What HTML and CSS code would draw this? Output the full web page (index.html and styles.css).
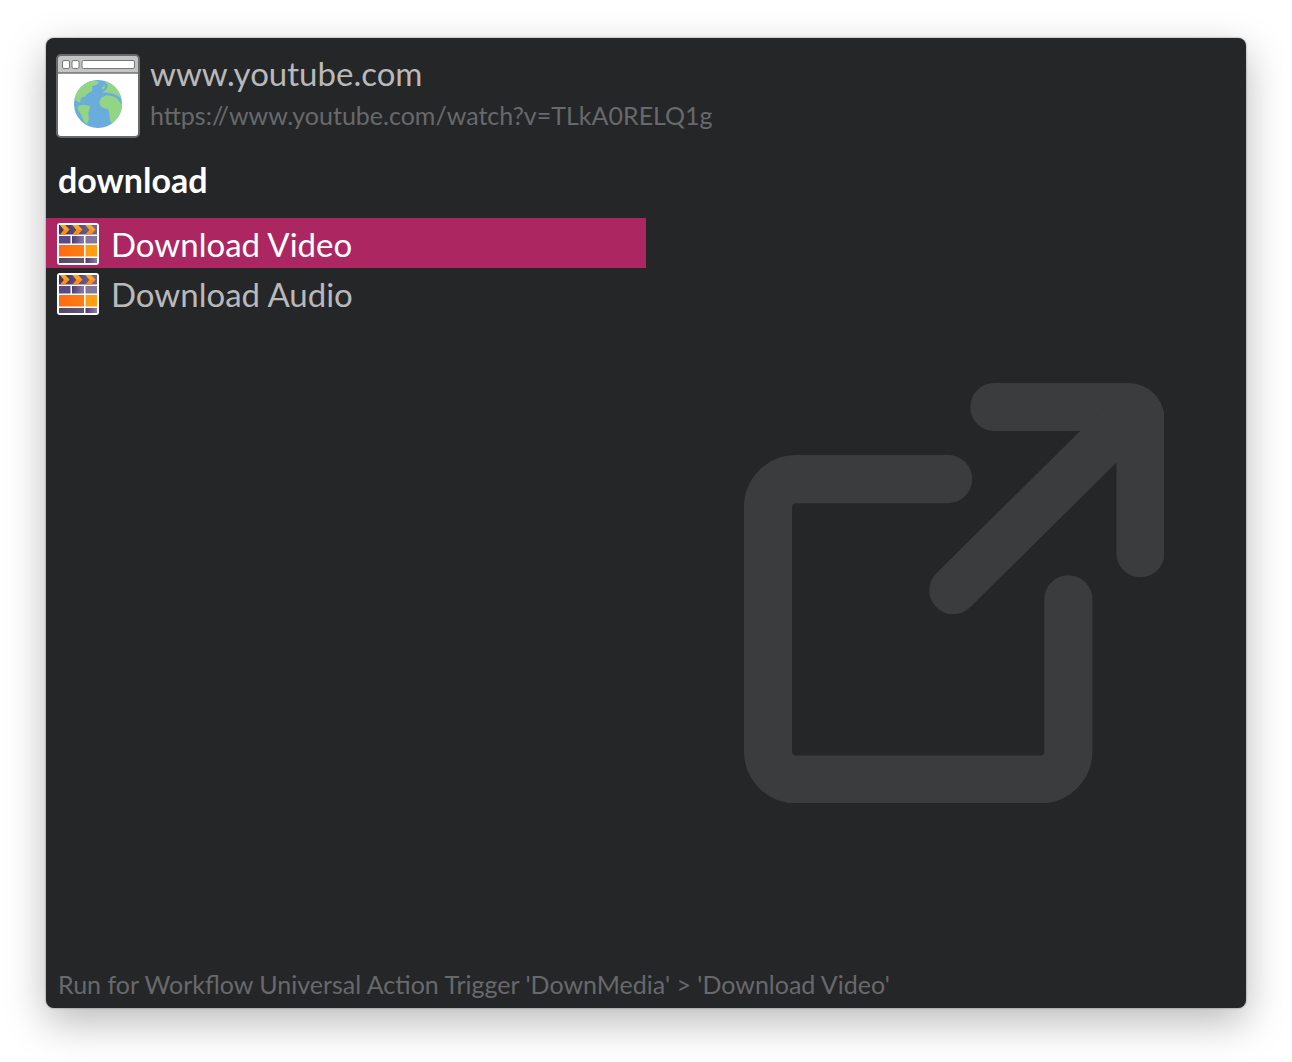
FILE: index.html
```html
<!DOCTYPE html>
<html lang="en">
<head>
<meta charset="utf-8">
<title>Universal Actions</title>
<link rel="stylesheet" href="styles.css">
</head>
<body>
<svg class="defs" aria-hidden="true">
  <defs>
    <linearGradient id="plum"><stop offset="0" stop-color="#4b3b74"/><stop offset="1" stop-color="#8c7da8"/></linearGradient>
    <linearGradient id="slate"><stop offset="0" stop-color="#544a64"/><stop offset="1" stop-color="#625477"/></linearGradient>
    <linearGradient id="orange"><stop offset="0" stop-color="#ff6a14"/><stop offset="1" stop-color="#ff7c12"/></linearGradient>
    <linearGradient id="board"><stop offset="0" stop-color="#40335f"/><stop offset="1" stop-color="#75659a"/></linearGradient>
    <symbol id="clapper" viewBox="0 0 42 42">
      <rect width="42" height="42" rx="3" fill="#fff"/>
      <rect x="2" y="2" width="38" height="9.500" fill="url(#board)"/>
      <path d="M3 2h5l4.500 4.700-4.500 4.800H3l4-4.800zM15.500 2h5.500l4.500 4.700-4.500 4.800h-5.500l4-4.800zM28.500 2h5.500l4.500 4.700-4.500 4.800h-5.500l4-4.800z" fill="#ff8c18"/>
      <path d="M3 2h5l4.500 4.700H7zM15.500 2h5.500l4.500 4.700h-6zM28.500 2h5.500l4.500 4.700h-6z" fill="#ffa61f"/>
      <rect x="2" y="13" width="11.500" height="7.500" fill="#5a4982"/>
      <rect x="15" y="13" width="12" height="7.500" fill="url(#plum)"/>
      <rect x="28.500" y="13" width="11.500" height="7.500" fill="#85769f"/>
      <rect x="2" y="22" width="25" height="11.500" fill="url(#orange)"/>
      <rect x="28.500" y="22" width="11.500" height="11.500" fill="#ff9d15"/>
      <rect x="2" y="35" width="25" height="5" fill="url(#slate)"/>
      <rect x="28.500" y="35" width="11.500" height="5" fill="url(#plum)"/>
    </symbol>
    <clipPath id="globe"><circle cx="42" cy="50" r="24"/></clipPath>
  </defs>
</svg>
<main class="panel">
  <header class="subject">
    <svg class="subject-icon" viewBox="0 0 84 84" aria-hidden="true">
      <rect x="1" y="1" width="82" height="82" rx="4" fill="#fff"/>
      <path d="M1 19V5a4 4 0 0 1 4-4h74a4 4 0 0 1 4 4v14z" fill="#c3c4c4"/>
      <path d="M1 19h82" stroke="#717273" stroke-width="1.500"/>
      <rect x="1" y="1" width="82" height="82" rx="4" fill="none" stroke="#69696a" stroke-width="2"/>
      <g fill="#fff" stroke="#777" stroke-width="1">
        <rect x="6.500" y="6.500" width="7" height="8" rx="1.500"/>
        <rect x="16" y="6.500" width="7" height="8" rx="1.500"/>
        <rect x="26" y="6.500" width="52.500" height="8" rx="1.500"/>
      </g>
      <circle cx="42" cy="50" r="24" fill="#6aacdc"/>
      <g clip-path="url(#globe)" fill="#94d585">
        <path d="M16 48V36L29 27C34 26.500 40 26.500 42.500 27.500C43 29.500 40 31.500 37 31.500C35 33 37 35 36 37C33 38 32 40 30 41L29 43C26 42 24 44 24.500 48C22 50 20 45 17.500 46z"/>
        <path d="M22 52C26 50.500 31 51 34.500 52.500C33 56 32 58 32.500 62C33 65 32.500 68 31 70C27 68 26 62 23.500 58C22 56 21 54 22 52z"/>
        <path d="M46 34L49 30L48.500 34.500L45.500 35.500z"/>
        <path d="M46 38.500L50 36L52 31L49 28L54 26L70 38V49C64 42 57 38 46 38.500z"/>
        <path d="M46 43.500C49 40.500 55 41 58 43C63 44 62 48 67 51V56C64 60 62 66 56 69C52 67 55 61 52 55C48 55 43.500 52 43.500 49C43.500 46 44.500 45 46 43.500z"/>
      </g>
    </svg>
    <div class="subject-text">
      <h1 class="subject-title">www.youtube.com</h1>
      <p class="subject-url">https://www.youtube.com/watch?v=TLkA0RELQ1g</p>
    </div>
  </header>
  <input class="search" type="text" value="download" aria-label="Search actions">
  <div class="body">
    <ul class="actions">
      <li><button class="action selected" type="button"><svg class="action-icon" aria-hidden="true"><use href="#clapper"/></svg>Download Video</button></li>
      <li><button class="action" type="button"><svg class="action-icon" aria-hidden="true"><use href="#clapper"/></svg>Download Audio</button></li>
    </ul>
    <div class="preview">
      <svg class="preview-icon" viewBox="0 0 420 420" aria-hidden="true">
        <g fill="none" stroke="#3b3c3e" stroke-width="48" stroke-linecap="round">
          <path d="M204 96H52a28 28 0 0 0-28 28V368a28 28 0 0 0 28 28H296a28 28 0 0 0 28-28V216"/>
          <path d="M250 24H384a12 12 0 0 1 12 12V170"/>
          <path d="M209 207L386 32"/>
        </g>
      </svg>
    </div>
  </div>
  <footer class="status">Run for Workflow Universal Action Trigger 'DownMedia' &gt; 'Download Video'</footer>
</main>
</body>
</html>
```
FILE: styles.css
```css
* {
  box-sizing: border-box;
}

body {
  margin: 0;
  padding: 38px 46px 54px;
  min-height: 100vh;
  display: flex;
  background: #fff;
  font-family: Lato, "Open Sans", sans-serif;
}

.defs {
  position: absolute;
  width: 0;
  height: 0;
}

.panel {
  flex: 1;
  min-width: 0;
  display: flex;
  flex-direction: column;
  background: #252628;
  border-radius: 8px;
  box-shadow: 0 0 2px rgba(0, 0, 0, 0.5), 0 14px 42px rgba(0, 0, 0, 0.28);
}

.subject {
  display: flex;
  gap: 10px;
  padding: 16px 10px 0;
}

.subject-icon {
  flex: none;
  width: 84px;
  height: 84px;
}

.subject-title,
.subject-url {
  margin: 0;
  font-weight: 400;
}

.subject-title {
  color: #b9b9ba;
  font-size: 33px;
  line-height: 38px;
}

.subject-url {
  color: #68696b;
  font-size: 25px;
  line-height: 46px;
}

.search {
  width: 100%;
  height: 80px;
  padding: 2px 12px 0;
  border: 0;
  outline: 0;
  background: none;
  color: #fff;
  font: inherit;
  font-size: 34px;
  font-weight: 700;
}

.body {
  flex: 1;
  display: grid;
  grid-template-columns: 1fr 1fr;
}

.actions {
  margin: 0;
  padding: 0;
  list-style: none;
}

.action {
  display: flex;
  align-items: center;
  gap: 12px;
  width: 100%;
  height: 50px;
  padding: 2px 11px 0;
  border: 0;
  background: none;
  color: #b9b9ba;
  font: inherit;
  font-size: 33px;
  text-align: left;
}

.action.selected {
  background: #ac2762;
  color: #fff;
}

.action-icon {
  flex: none;
  width: 42px;
  height: 42px;
}

.preview {
  display: flex;
  align-items: center;
  justify-content: center;
  padding-left: 16px;
}

.preview-icon {
  width: 72%;
}

.status {
  padding: 0 12px 8px;
  color: #68696b;
  font-size: 25px;
  line-height: 32px;
}
```
